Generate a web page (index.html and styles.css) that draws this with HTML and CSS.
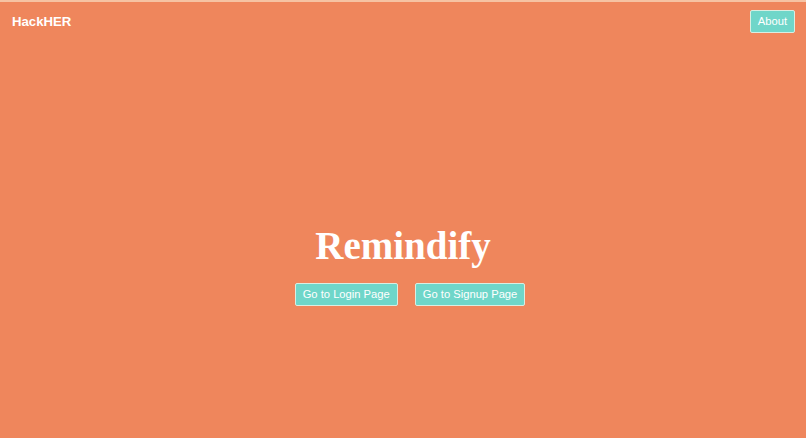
FILE: index.html
```html
<!DOCTYPE html>
<html>
<head>
<meta charset="utf-8">
<link rel="stylesheet" href="styles.css">
</head>
<body>
<div class="topline"></div>
<nav class="nav">
  <div class="brand">HackHER</div>
  <button class="btn">About</button>
</nav>
<main class="hero">
  <h1 class="title">Remindify</h1>
  <div class="actions">
    <button class="btn">Go to Login Page</button>
    <button class="btn">Go to Signup Page</button>
  </div>
</main>
</body>
</html>
```
FILE: styles.css
```css
html, body {
  margin: 0;
  padding: 0;
  height: 100%;
}
body {
  background: #ef865c;
  font-family: "Liberation Sans", Arial, sans-serif;
  color: #fff;
}
.topline {
  height: 2px;
  background: #f6c3a3;
}
.nav {
  display: flex;
  justify-content: space-between;
  align-items: center;
  padding: 8px 11px 0 12px;
  height: 23px;
}
.brand {
  font-weight: bold;
  font-size: 13.2px;
}
.btn {
  font-family: "Liberation Sans", Arial, sans-serif;
  font-size: 11.2px;
  line-height: 13px;
  color: #fff;
  background: #6fd6c9;
  border: 1px solid #d9eee2;
  border-radius: 2px;
  padding: 4px 7px;
  margin: 0;
}
.hero {
  display: flex;
  flex-direction: column;
  align-items: center;
  padding-top: 193px;
}
.title {
  font-family: "Liberation Serif", "Times New Roman", serif;
  font-weight: bold;
  font-size: 39px;
  line-height: 39px;
  margin: 0 0 18px 0;
}
.actions {
  display: flex;
  gap: 17px;
  margin-left: 14px;
}
```
